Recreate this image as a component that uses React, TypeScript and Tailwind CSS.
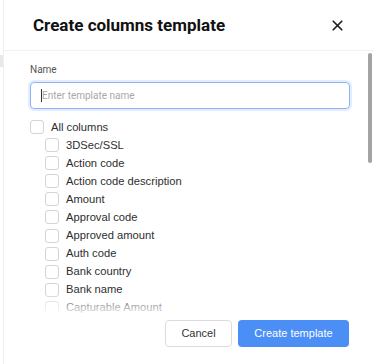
import { X } from "lucide-react";

const COLUMNS = [
  "3DSec/SSL",
  "Action code",
  "Action code description",
  "Amount",
  "Approval code",
  "Approved amount",
  "Auth code",
  "Bank country",
  "Bank name",
  "Capturable Amount",
];

const Box = () => (
  <span className="w-[14px] h-[14px] shrink-0 rounded-[3px] border border-[#d4d4d4] bg-white" />
);

const App = () => {
  return (
    <div className="w-[374px] h-[364px] bg-white flex overflow-hidden font-['Roboto',sans-serif]">
      {/* backdrop sliver */}
      <div className="w-[3px] shrink-0 flex flex-col">
        <div className="h-[55px]" />
        <div className="h-[12px] bg-[#e8e8e8]" />
      </div>

      <div className="flex-1 flex flex-col border-l border-[#f0f0f0] relative">
        {/* Header */}
        <div className="h-[51px] shrink-0 flex items-center justify-between pl-[29px] pr-[28px] border-b border-[#f2f2f2]">
          <h1 className="text-[17px] font-bold text-[#111] leading-none">
            Create columns template
          </h1>
          <X className="w-[17px] h-[17px] text-[#222]" strokeWidth={2.4} />
        </div>

        {/* Body */}
        <div className="h-[263px] shrink-0 overflow-hidden relative pl-[26px] pr-[22px]">
          <div className="pt-[12px] text-[10px] text-[#555] leading-[14px]">Name</div>
          <div className="mt-[5px] h-[27px] w-[320px] rounded-[4px] border border-[#8fb4f5] ring-2 ring-[#e3edff] flex items-center pl-[10px]">
            <span className="w-px h-[13px] bg-[#333]" />
            <span className="text-[10px] text-[#a8a8a8]">Enter template name</span>
          </div>

          <div className="mt-[9px] font-['Liberation_Sans',Arial,sans-serif] text-[11.2px] text-[#2e2e2e]">
            <div className="h-[18px] flex items-center gap-[7px]">
              <Box />
              <span>All columns</span>
            </div>
            {COLUMNS.map((c) => (
              <div key={c} className="h-[18.1px] flex items-center gap-[7px] pl-[15px]">
                <Box />
                <span>{c}</span>
              </div>
            ))}
          </div>

          <div className="absolute left-0 right-0 bottom-0 h-[22px] bg-gradient-to-b from-white/0 to-white/90" />
        </div>

        {/* Footer */}
        <div className="flex-1 flex items-start justify-end gap-[6px] pt-[6px] pr-[25px]">
          <button className="h-[27px] w-[67px] rounded-[4px] border border-[#dcdcdc] bg-white text-[11px] text-[#333] font-['Liberation_Sans',Arial,sans-serif]">
            Cancel
          </button>
          <button className="h-[27px] w-[111px] rounded-[4px] bg-[#4a8ef6] text-[11px] text-white font-['Liberation_Sans',Arial,sans-serif]">
            Create template
          </button>
        </div>

        {/* scrollbar thumb */}
        <div className="absolute right-[2px] top-[53px] w-[4px] h-[110px] rounded-full bg-[#a3a3a3]" />
      </div>
    </div>
  );
};

export default App;
